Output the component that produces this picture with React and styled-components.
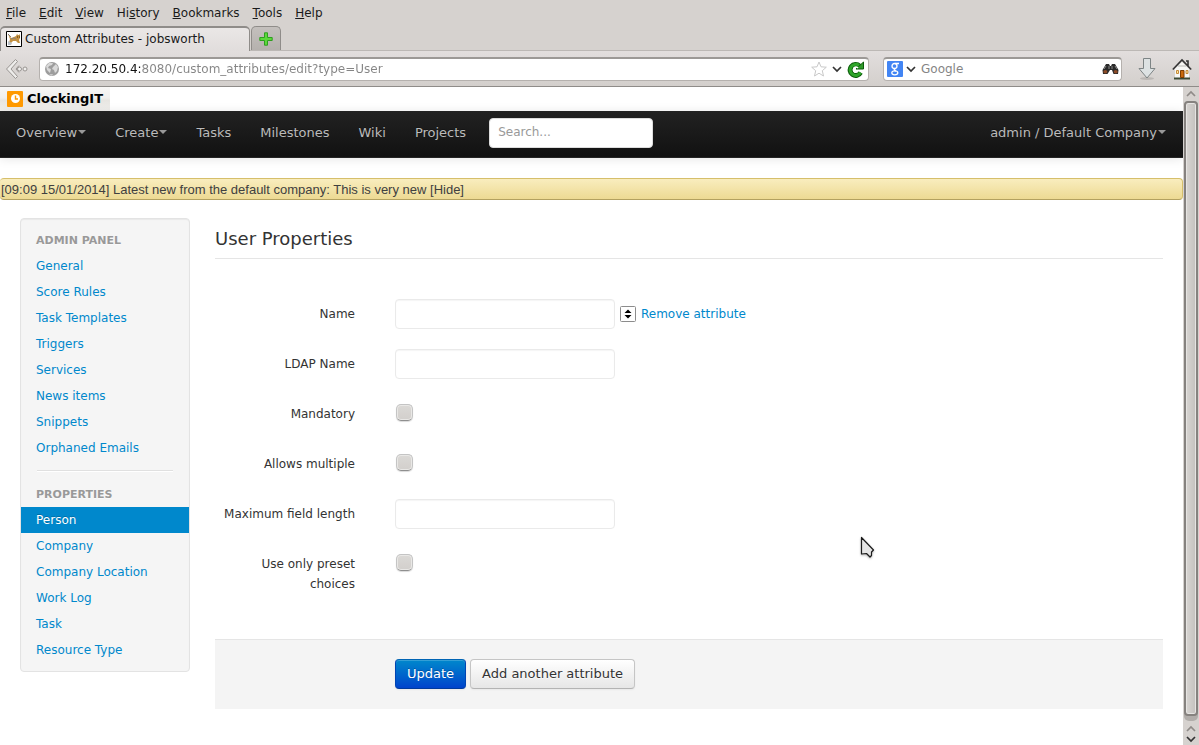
import React from "react";
import styled, { createGlobalStyle, css } from "styled-components";

const GlobalStyle = createGlobalStyle`
  *, *::before, *::after { box-sizing: border-box; }
  body { margin: 0; background: #fff; color: #333; font: 12px/20px "DejaVu Sans", sans-serif; }
  input, button { font: inherit; margin: 0; }
  ul { list-style: none; margin: 0; padding: 0; }
  a { color: #08c; text-decoration: none; }
  svg { display: block; flex: none; }
`;

const Window = styled.div`
  position: relative;
  display: flex;
  flex-direction: column;
  min-height: 100vh;
`;

const MenuBar = styled.nav`
  display: flex;
  gap: 13px;
  height: 26px;
  padding: 3px 6px;
  background: #d6d2cf;
  color: #1a1a1a;
`;
const MenuItem = styled.button`
  border: 0;
  padding: 0;
  background: none;
  color: inherit;
  &::first-letter { text-decoration: ${(p) => (p.$plain ? "none" : "underline")}; }
`;

const TabStrip = styled.div`
  display: flex;
  align-items: flex-end;
  height: 25px;
  gap: 1px;
  background: #d6d2cf;
  border-bottom: 1px solid #bcb8b5;
`;
const Tab = styled.button`
  display: flex;
  align-items: center;
  gap: 3px;
  width: 250px;
  height: 25px;
  margin-bottom: -1px;
  padding: 0 5px 2px;
  border: 1px solid #8f8c89;
  border-top-width: 2px;
  border-bottom: 0;
  border-radius: 5px 5px 0 0;
  background: linear-gradient(#eae7e6, #e1dddc);
  color: #1a1a1a;
`;
const NewTab = styled.button`
  display: flex;
  align-items: center;
  justify-content: center;
  width: 30px;
  height: 24px;
  padding: 0;
  border: 1px solid #8f8c89;
  border-bottom: 0;
  border-radius: 5px 5px 0 0;
  background: linear-gradient(#c4c0bd, #b5b1ae);
`;

const Toolbar = styled.div`
  display: flex;
  align-items: center;
  height: 36px;
  padding: 0 7px 0 5px;
  background: linear-gradient(#e2dedd, #d3cfcc);
  border-bottom: 1px solid #8f8c89;
`;
const Field = styled.div`
  display: flex;
  align-items: center;
  height: 24px;
  padding: 0 4px;
  border: 1px solid #b5b1ae;
  border-top: 2px solid #9c9996;
  border-radius: 4px;
  background: #fff;
`;
const AddressField = styled(Field)`
  flex: 1;
  gap: 5px;
  margin: 0 14px 0 10px;
`;
const WebSearchField = styled(Field)`
  width: 239px;
  gap: 3px;
  padding: 0 2px 0 3px;
  margin-right: 15px;
`;
const PlainInput = styled.input`
  flex: 1;
  min-width: 0;
  height: 20px;
  padding: 0;
  border: 0;
  outline: 0;
  background: none;
  &::placeholder { color: #858585; opacity: 1; }
`;
const SearchEngineInput = styled(PlainInput)`
  padding-left: 2px;
`;
const AddressInput = styled(PlainInput)`
  background: linear-gradient(90deg, #111 76px, #858585 76px);
  background-clip: text;
  color: transparent;
`;
const IconButton = styled.button`
  display: flex;
  padding: 0;
  border: 0;
  background: none;
  margin-left: ${(p) => p.$before || 0}px;
`;

const Viewport = styled.div`
  display: flex;
  flex: 1;
`;
const Page = styled.div`
  flex: 1;
  min-width: 0;
`;

const Brand = styled.a`
  display: flex;
  align-items: center;
  gap: 4px;
  width: fit-content;
  height: 24px;
  padding: 0 7px;
  background: linear-gradient(#f8f7f6, #f0efed 45%, #e7e5e1 55%, #f2f1ef);
  color: #000;
  font-size: 13px;
  font-weight: bold;
`;

const NavBar = styled.nav`
  display: flex;
  align-items: center;
  height: 47px;
  padding: 0 17px 3px 16px;
  background: linear-gradient(#222, #111);
  border-bottom: 1px solid #252525;
  box-shadow: 0 1px 10px rgba(0, 0, 0, 0.1);
  font-size: 13px;
`;
const NavLinks = styled.ul`
  display: flex;
  flex: 1;
  align-items: center;
  gap: 29px;
`;
const NavLink = styled.a`
  display: flex;
  align-items: center;
  color: #bbb;
  text-shadow: 0 -1px 0 rgba(0, 0, 0, 0.25);
  ${(p) => p.$menu && css`
    &::after {
      content: "";
      margin: 0 0 2px 1px;
      border: 4px solid transparent;
      border-top-color: #999;
      border-bottom: 0;
    }
  `}
`;
const SiteSearch = styled.input`
  display: block;
  width: 164px;
  height: 30px;
  margin-left: -6px;
  padding: 0 8px 2px;
  border: 1px solid #ddd;
  border-radius: 4px;
  background: #fff;
  font-size: 12px;
  &::placeholder { color: #999; opacity: 1; }
`;

const Notice = styled.div`
  margin-top: 20px;
  height: 22px;
  padding-left: 1px;
  border: 1px solid #d6bf6b;
  border-left: 0;
  border-bottom-color: #b3a160;
  border-radius: 4px;
  background: linear-gradient(#f9edbe, #edda93);
  color: #404040;
  font: 13px/22px "Liberation Sans", sans-serif;
  a { color: inherit; }
`;

const Columns = styled.div`
  display: flex;
  align-items: flex-start;
  gap: 25px;
  padding: 18px 20px 36px;
`;
const SideBar = styled.aside`
  flex: none;
  width: 170px;
  padding: 8px 0;
  border: 1px solid #e3e3e3;
  border-radius: 4px;
  background: #f5f5f5;
  box-shadow: inset 0 1px 1px rgba(0, 0, 0, 0.05);
`;
const SideHeading = styled.h2`
  margin: 0;
  padding: 4px 15px 2px;
  color: #999;
  font-size: 11px;
  line-height: 20px;
  text-transform: uppercase;
  text-shadow: 0 1px 0 rgba(255, 255, 255, 0.5);
`;
const SideLink = styled.a`
  display: block;
  padding: 3px 15px;
  ${(p) => p.$active && css`
    background: #08c;
    color: #fff;
    text-shadow: 0 -1px 0 rgba(0, 0, 0, 0.2);
  `}
`;
const Divider = styled.hr`
  height: 2px;
  margin: 9px 16px;
  border: 0;
  border-top: 1px solid #e0e0e0;
  background: #fff;
`;

const Main = styled.main`
  flex: 1;
  min-width: 0;
`;
const Title = styled.h1`
  margin: 0 0 40px;
  padding-top: 2px;
  border-bottom: 1px solid #e5e5e5;
  font-size: 18px;
  font-weight: normal;
  line-height: 38px;
`;
const FormRow = styled.div`
  display: flex;
  align-items: flex-start;
  gap: 40px;
  margin-bottom: 20px;
`;
const Label = styled.label`
  width: 140px;
  padding-top: 5px;
  text-align: right;
`;
const Controls = styled.div`
  display: flex;
  align-items: center;
  gap: 5px;
  height: 30px;
`;
const TextInput = styled.input`
  width: 220px;
  height: 30px;
  padding: 4px 6px;
  border: 1px solid #eaeaea;
  border-radius: 4px;
  background: #fff;
  box-shadow: inset 0 1px 1px rgba(0, 0, 0, 0.04);
`;
const CheckBox = styled.input`
  appearance: none;
  width: 17px;
  height: 17px;
  margin: 0 0 3px 1px;
  border: 1px solid #c4c4c4;
  border-bottom-color: #8f8f8f;
  border-radius: 5px;
  background: linear-gradient(#dbd9d6, #d2cfcc);
  box-shadow: inset 0 0 0 1px #e9e8e6, 0 1px 1px rgba(0, 0, 0, 0.15);
`;
const Actions = styled.div`
  display: flex;
  gap: 4px;
  margin-top: 45px;
  padding: 19px 20px 20px 180px;
  border-top: 1px solid #e5e5e5;
  background: #f4f4f4;
`;
const Button = styled.button`
  height: 30px;
  padding: 0 11px;
  border: 1px solid #c5c5c5;
  border-bottom-color: #b3b3b3;
  border-radius: 4px;
  background: linear-gradient(#fff, #e6e6e6);
  color: #333;
  font-size: 13px;
  text-shadow: 0 1px 1px rgba(255, 255, 255, 0.75);
  box-shadow: inset 0 1px 0 rgba(255, 255, 255, 0.2), 0 1px 2px rgba(0, 0, 0, 0.05);
  ${(p) => p.$primary && css`
    border-color: #0064b4 #0044b3 #003a9c;
    background: linear-gradient(#08c, #04c);
    color: #fff;
    text-shadow: 0 -1px 0 rgba(0, 0, 0, 0.25);
  `}
`;

const ScrollBar = styled.div`
  display: flex;
  flex-direction: column;
  align-items: center;
  width: 16px;
  padding: 3px 1px 2px;
  gap: 4px;
  background: #d6d2cf;
`;
const Track = styled.div`
  display: flex;
  flex: 1;
  width: 14px;
  padding-bottom: 5px;
  border-radius: 5px;
  background: #b1adaa;
`;
const Thumb = styled.div`
  flex: 1;
  border: 2px solid #86827f;
  border-radius: 4px;
  background: linear-gradient(90deg, #d8d5d2, #c4c1be);
  box-shadow: inset 0 0 0 1px #e6e4e2;
`;
const Pointer = styled.div`
  position: absolute;
  left: 860px;
  top: 536px;
  filter: drop-shadow(0 1px 1px rgba(0, 0, 0, 0.3));
`;

const Chevron = ({ up, color = "#333" }) => (
  <svg width="10" height="7" viewBox="0 0 10 7" fill="none" stroke={color} strokeWidth="1.700">
    <path d={up ? "M1 6l4-4 4 4" : "M1 1l4 4 4-4"} />
  </svg>
);
const CatIcon = () => (
  <svg width="16" height="16" viewBox="0 0 16 16">
    <path d="M.5 .5h15v15H.5z" fill="#fff" stroke="#000" />
    <path d="M2 3l3 4 3-1 2-1 1-2 1 1h1l1-1v4l-1 2 1 3h-2l-2-2H7l-2 2H3l1-4z" fill="#c39142" />
    <path d="M2 3l3 3M5 8l3-1 2 1" stroke="#8a8078" fill="none" />
    <path d="M2 10l4 2-1 2H2z" fill="#b9c0c8" />
    <path d="M11 6h1M13 6h1" stroke="#4b2c0d" />
  </svg>
);
const PlusIcon = () => (
  <svg width="14" height="14" viewBox="0 0 14 14">
    <path d="M5.500 .8h3v4.700h4.700v3H8.500v4.700h-3V8.500H.8v-3h4.700z" fill="#5bd83b" stroke="#2f9e20" strokeLinejoin="round" />
  </svg>
);
const BackIcon = () => (
  <svg width="24" height="22" viewBox="0 0 24 22">
    <path d="M10.500 1.500l2 2L6 11l6.500 7.500-2 2L1.500 11z" fill="#eeedeb" stroke="#999592" strokeLinejoin="round" />
    <path d="M14 7.500l-3 3.500 3 3.500" fill="none" stroke="#999592" />
    <circle cx="14.500" cy="11" r="2" fill="#efeeec" stroke="#999592" />
    <circle cx="20" cy="11" r="2" fill="#efeeec" stroke="#999592" />
  </svg>
);
const GlobeIcon = () => (
  <svg width="16" height="16" viewBox="0 0 16 16">
    <circle cx="8" cy="8" r="7" fill="#9d9d9d" />
    <path d="M2 5l3-3 4 0-1 2-3 1-1 2 3 1-1 4-3-3zM9 6l3-3 2 3-1 4-2 2-1-3-2-1z" fill="#d9d9d9" />
    <path d="M5 13h4l-1 2z" fill="#c9c9c9" />
  </svg>
);
const StarIcon = () => (
  <svg width="16" height="16" viewBox="0 0 16 16">
    <path d="M8 1l2 4.800 5.300.4-4 3.500 1.200 5.300L8 12.200 3.500 15l1.200-5.300-4-3.500L6 5.800z" fill="#fff" stroke="#c9c9c9" strokeLinejoin="round" />
  </svg>
);
const ReloadIcon = () => (
  <svg width="17" height="17" viewBox="0 0 17 17">
    <path d="M13.500 11.500a5.500 5.500 0 1 1-1-6.500" fill="none" stroke="#0b5c0b" strokeWidth="5" />
    <path d="M9 8h7.500V1z" fill="#2f9b2a" stroke="#0b5c0b" strokeLinejoin="round" />
    <path d="M13.500 11.500a5.500 5.500 0 1 1-1.500-7" fill="none" stroke="#2fa52a" strokeWidth="3" />
    <path d="M11 10a2.500 2.500 0 1 1 0-3" fill="none" stroke="#fff" strokeWidth="1.500" />
  </svg>
);
const SearchEngineIcon = () => (
  <svg width="16" height="16" viewBox="0 0 16 16">
    <rect width="16" height="16" rx="1" fill="#4285f4" />
    <g fill="none" stroke="#fff" strokeWidth="1.300">
      <ellipse cx="7.500" cy="5" rx="2.500" ry="2.500" />
      <path d="M8 2.500h4M9 7.500c-3 1-2 2 0 2.500" />
      <ellipse cx="7.800" cy="11.800" rx="3" ry="2" />
    </g>
  </svg>
);
const BinocularsIcon = () => (
  <svg width="17" height="12" viewBox="0 0 17 12">
    <path d="M4 1h3l1 2h1l1-2h3l3.500 6-.5 4h-4.500l-1.500-4h-2L5.500 11H1L.5 7z" fill="#2b2b2b" />
    <path d="M4 3L2 6M13 3l2 3M7 3v3M10 3v3" stroke="#8b8b8b" />
    <ellipse cx="3.300" cy="8.800" rx="2" ry="1.700" fill="#8c4b27" />
    <ellipse cx="13.700" cy="8.800" rx="2" ry="1.700" fill="#8c4b27" />
  </svg>
);
const DownloadIcon = () => (
  <svg width="20" height="24" viewBox="0 0 20 24">
    <ellipse cx="10" cy="21.500" rx="7" ry="1.500" fill="#bbb7b4" />
    <path d="M6.500 1.500h7v10h4.500L10 21 2 11.500h4.500z" fill="#dde2e3" stroke="#7d8485" strokeLinejoin="round" />
  </svg>
);
const HomeIcon = () => (
  <svg width="20" height="22" viewBox="0 0 20 22">
    <path d="M3 11l7-7 7 7v9H3z" fill="#f7f7f5" />
    <path d="M.8 11.500L10 2l9.200 9.500M14 3h2v5" fill="none" stroke="#333" strokeWidth="1.600" />
    <path d="M2 20.500h16" stroke="#3c4a34" strokeWidth="2" />
    <path d="M8.500 12.500h3.500v7H8.500z" fill="#c9690b" stroke="#7c3d00" />
    <path d="M4.500 12.500h2v3h-2zM14 12.500h2v3h-2z" fill="#ffe79c" stroke="#c58b3c" />
    <path d="M6 8h8" stroke="#b9b9b5" />
  </svg>
);
const ClockIcon = () => (
  <svg width="16" height="16" viewBox="0 0 16 16">
    <rect width="16" height="16" rx="1" fill="#f90" />
    <circle cx="8.500" cy="7.500" r="4.500" fill="#fff" />
    <path d="M8.500 4.500v3.500H11" fill="none" stroke="#f90" strokeWidth="1.400" />
  </svg>
);
const SortIcon = () => (
  <svg width="16" height="16" viewBox="0 0 16 16">
    <rect x=".5" y=".5" width="15" height="15" rx="1" fill="#fff" stroke="#8c8c8c" />
    <path d="M4.500 7L8 3.500 11.500 7zM4.500 9L8 12.500 11.500 9z" />
  </svg>
);
const PointerIcon = () => (
  <svg width="16" height="24" viewBox="0 0 16 24">
    <path d="M1.500 1.500v16.500l5-.5 3.500 3.500 1.500-1.500v-3.500l2-2z" fill="#e5e5e5" stroke="#1c1c1c" strokeWidth="1.200" strokeLinejoin="round" />
  </svg>
);

const menus = ["File", "Edit", "View", null, "Bookmarks", "Tools", "Help"];
const adminLinks = ["General", "Score Rules", "Task Templates", "Triggers", "Services", "News items", "Snippets", "Orphaned Emails"];
const propertyLinks = ["Person", "Company", "Company Location", "Work Log", "Task", "Resource Type"];
const navLinks = ["Overview", "Create", "Tasks", "Milestones", "Wiki", "Projects"];
const fields = [
  { id: "name", label: "Name", removable: true },
  { id: "ldap", label: "LDAP Name" },
  { id: "mandatory", label: "Mandatory", check: true },
  { id: "multiple", label: "Allows multiple", check: true },
  { id: "max-length", label: "Maximum field length" },
  { id: "preset", label: "Use only preset choices", check: true },
];

const LinkList = ({ items, active }) => (
  <ul>
    {items.map((item) => (
      <li key={item}><SideLink href="#" $active={item === active}>{item}</SideLink></li>
    ))}
  </ul>
);

export default function App() {
  return (
    <Window>
      <GlobalStyle />
      <MenuBar>
        {menus.map((m) => m
          ? <MenuItem key={m}>{m}</MenuItem>
          : <MenuItem key="History" $plain>Hi<u>s</u>tory</MenuItem>)}
      </MenuBar>
      <TabStrip>
        <Tab><CatIcon />Custom Attributes - jobsworth</Tab>
        <NewTab aria-label="New tab"><PlusIcon /></NewTab>
      </TabStrip>
      <Toolbar>
        <IconButton aria-label="Back"><BackIcon /></IconButton>
        <AddressField>
          <GlobeIcon />
          <AddressInput aria-label="Address" defaultValue="172.20.50.4:8080/custom_attributes/edit?type=User" />
          <IconButton aria-label="Bookmark"><StarIcon /></IconButton>
          <IconButton aria-label="History"><Chevron /></IconButton>
          <IconButton aria-label="Reload"><ReloadIcon /></IconButton>
        </AddressField>
        <WebSearchField>
          <SearchEngineIcon />
          <Chevron />
          <SearchEngineInput aria-label="Web search" placeholder="Google" />
          <IconButton aria-label="Find"><BinocularsIcon /></IconButton>
        </WebSearchField>
        <IconButton aria-label="Downloads"><DownloadIcon /></IconButton>
        <IconButton aria-label="Home" $before={15}><HomeIcon /></IconButton>
      </Toolbar>
      <Viewport>
        <Page>
          <Brand href="#"><ClockIcon />ClockingIT</Brand>
          <NavBar>
            <NavLinks>
              {navLinks.map((l, i) => <li key={l}><NavLink href="#" $menu={i < 2}>{l}</NavLink></li>)}
              <li><SiteSearch aria-label="Search" placeholder="Search..." /></li>
            </NavLinks>
            <NavLink href="#" $menu>admin / Default Company</NavLink>
          </NavBar>
          <Notice>[09:09 15/01/2014] Latest new from the default company: This is very new <a href="#">[Hide]</a></Notice>
          <Columns>
            <SideBar>
              <SideHeading>Admin Panel</SideHeading>
              <LinkList items={adminLinks} />
              <Divider />
              <SideHeading>Properties</SideHeading>
              <LinkList items={propertyLinks} active="Person" />
            </SideBar>
            <Main>
              <Title>User Properties</Title>
              <form onSubmit={(e) => e.preventDefault()}>
                {fields.map((f) => (
                  <FormRow key={f.id}>
                    <Label htmlFor={f.id}>{f.label}</Label>
                    <Controls>
                      {f.check ? <CheckBox type="checkbox" id={f.id} /> : <TextInput type="text" id={f.id} />}
                      {f.removable && <><SortIcon /><a href="#">Remove attribute</a></>}
                    </Controls>
                  </FormRow>
                ))}
                <Actions>
                  <Button type="submit" $primary>Update</Button>
                  <Button type="button">Add another attribute</Button>
                </Actions>
              </form>
            </Main>
          </Columns>
        </Page>
        <ScrollBar>
          <Chevron up color="#8f8b88" />
          <Track><Thumb /></Track>
          <Chevron up color="#8f8b88" />
          <Chevron />
        </ScrollBar>
      </Viewport>
      <Pointer><PointerIcon /></Pointer>
    </Window>
  );
}
